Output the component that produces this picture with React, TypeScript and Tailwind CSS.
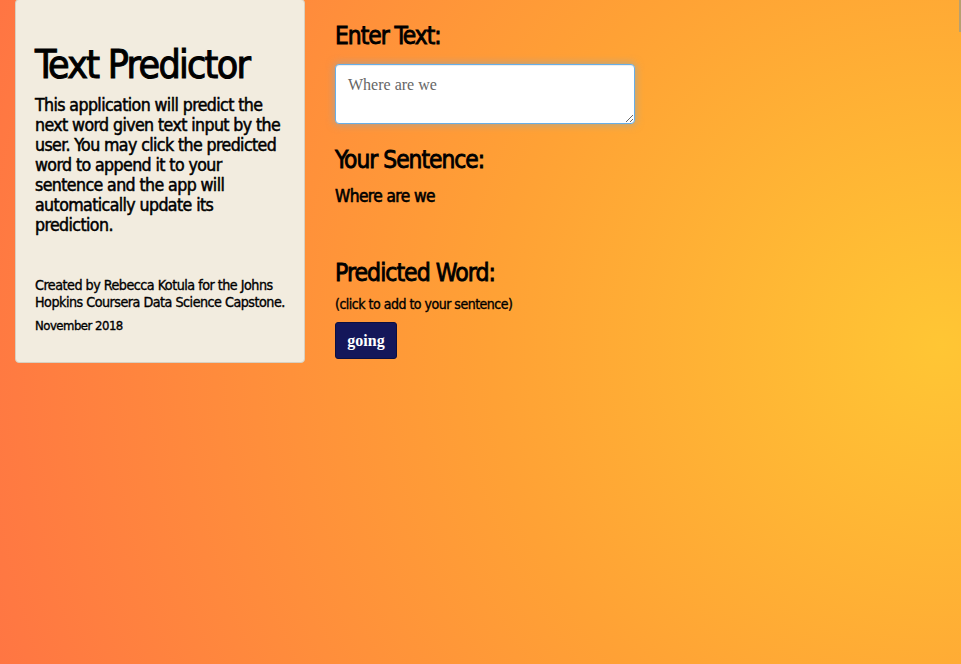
export default function App() {
  const cond = { fontFamily: '"DejaVu Sans Condensed", "DejaVu Sans", sans-serif' };
  const serif = { fontFamily: 'Georgia, "Liberation Serif", serif' };
  return (
    <div
      className="w-[961px] h-[664px] overflow-hidden relative bg-[radial-gradient(circle_at_98%_52%,#ffc634_0%,#ffa135_45%,#ff7543_100%)]"
      style={cond}
    >
      <div className="flex gap-[30px] pl-[15px]">
        <div className="w-[290px] h-[364px] -mt-[1px] bg-[#f2ecdf] border border-[#d8d0c0] rounded-[4px] px-[19px] pt-[42px] text-black">
          <h1 className="text-[39px] leading-[46px] tracking-[-1.7px] font-normal [-webkit-text-stroke:1px_black]">Text Predictor</h1>
          <p className="mt-[7px] text-[17.6px] leading-[20px] tracking-[-0.6px] [-webkit-text-stroke:0.5px_black]">
            This application will predict the next word given text input by the user. You may click the predicted word to append it to your sentence and the app will automatically update its prediction.
          </p>
          <p className="mt-[42px] text-[14.2px] leading-[17px] tracking-[-0.5px] [-webkit-text-stroke:0.35px_black]">
            Created by Rebecca Kotula for the Johns Hopkins Coursera Data Science Capstone.
          </p>
          <p className="mt-[6px] text-[13px] leading-[17px] tracking-[-0.5px] [-webkit-text-stroke:0.35px_black]">November 2018</p>
        </div>
        <div className="pt-[22px] text-black">
          <h2 className="text-[24.3px] leading-[28px] tracking-[-1px] [-webkit-text-stroke:0.8px_black]">Enter Text:</h2>
          <textarea
            className="mt-[14px] block w-[300px] h-[60px] bg-white border border-[#66afe9] rounded-[4px] px-[12px] py-[8px] text-[16px] text-[#666] shadow-[inset_0_1px_1px_rgba(0,0,0,0.075),0_0_8px_rgba(102,175,233,0.6)] outline-none"
            style={serif}
            defaultValue="Where are we"
          />
          <h2 className="mt-[22px] text-[24.3px] leading-[28px] tracking-[-1px] [-webkit-text-stroke:0.8px_black]">Your Sentence:</h2>
          <p className="mt-[11px] text-[17.2px] leading-[22px] tracking-[-0.6px] [-webkit-text-stroke:0.6px_black]">Where are we</p>
          <h2 className="mt-[52px] text-[24.6px] leading-[28px] tracking-[-1px] [-webkit-text-stroke:0.8px_black]">Predicted Word:</h2>
          <p className="mt-[8px] text-[14px] leading-[18px] tracking-[-0.5px] [-webkit-text-stroke:0.35px_black]">(click to add to your sentence)</p>
          <button
            className="mt-[9px] w-[62px] h-[37px] bg-[#14175a] border border-[#0c0f40] rounded-[3px] text-white text-[16px] font-semibold"
            style={serif}
          >
            going
          </button>
        </div>
      </div>
      <div className="absolute right-0 top-0 w-[2px] h-[32px] bg-[#b8a070]" />
    </div>
  );
}
